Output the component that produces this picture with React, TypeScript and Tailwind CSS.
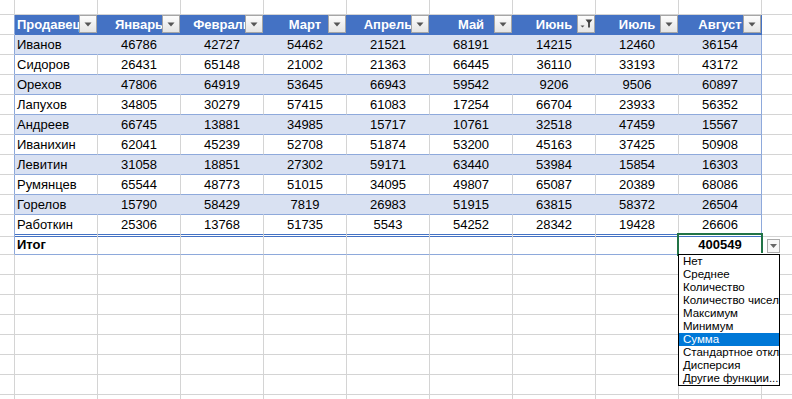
import React from 'react'

const months = ['Январь', 'Февраль', 'Март', 'Апрель', 'Май', 'Июнь', 'Июль', 'Август']

const sales: [string, number[]][] = [
  ['Иванов', [46786, 42727, 54462, 21521, 68191, 14215, 12460, 36154]],
  ['Сидоров', [26431, 65148, 21002, 21363, 66445, 36110, 33193, 43172]],
  ['Орехов', [47806, 64919, 53645, 66943, 59542, 9206, 9506, 60897]],
  ['Лапухов', [34805, 30279, 57415, 61083, 17254, 66704, 23933, 56352]],
  ['Андреев', [66745, 13881, 34985, 15717, 10761, 32518, 47459, 15567]],
  ['Иванихин', [62041, 45239, 52708, 51874, 53200, 45163, 37425, 50908]],
  ['Левитин', [31058, 18851, 27302, 59171, 63440, 53984, 15854, 16303]],
  ['Румянцев', [65544, 48773, 51015, 34095, 49807, 65087, 20389, 68086]],
  ['Горелов', [15790, 58429, 7819, 26983, 51915, 63815, 58372, 26504]],
  ['Работкин', [25306, 13768, 51735, 5543, 54252, 28342, 19428, 26606]],
]

const totals = ['Нет', 'Среднее', 'Количество', 'Количество чисел', 'Максимум', 'Минимум', 'Сумма', 'Стандартное отклонение', 'Дисперсия', 'Другие функции...']

const rowCls = 'grid grid-cols-[15px_repeat(9,83px)_30px] h-[20px]'

// пустая ячейка листа
const Blank = ({ last }: { last?: boolean }) => (
  <div className={last ? 'border-b border-b-[#d4d4d4]' : 'border-r border-b border-r-[#d4d4d4] border-b-[#d4d4d4]'} />
)

// столбец слева от таблицы: правая граница — граница таблицы
const Edge = () => <div className="border-r border-b border-r-[#8ea9db] border-b-[#d4d4d4]" />

function FilterButton({ active }: { active?: boolean }) {
  return (
    <div className="absolute right-0 top-0 w-[18px] h-[18px] border border-[#a6a6a6] bg-linear-to-b from-[#fdfdfd] to-[#e4e4e4] flex items-center justify-center">
      {active ? (
        <svg width="16" height="16" viewBox="0 0 16 16">
          <path d="M2.5 9.5h4L4.5 11.5z" fill="#505050" />
          <path d="M7.5 3.5h7l-2.6 3.2v4.8h-1.8V6.7z" fill="#404040" />
        </svg>
      ) : (
        <svg width="8" height="5" viewBox="0 0 8 5">
          <path d="M0.5 0.5h7L4 4.5z" fill="#555" />
        </svg>
      )}
    </div>
  )
}

function HeaderRow() {
  return (
    <div className={rowCls}>
      <Edge />
      <div className="relative bg-[#4472c4] border-r border-b border-r-[#4472c4] border-b-[#4472c4] text-white font-bold leading-[19px] whitespace-nowrap overflow-hidden pl-[2px]">
        Продавец
        <FilterButton />
      </div>
      {months.map((m, i) => (
        <div
          key={m}
          className="relative bg-[#4472c4] border-r border-b border-r-[#4472c4] border-b-[#4472c4] text-white font-bold leading-[19px] whitespace-nowrap overflow-hidden flex justify-center"
        >
          <span>{m}</span>
          <FilterButton active={i === 5} />
        </div>
      ))}
      <Blank last />
    </div>
  )
}

function DataRow({ name, values, band, last }: { name: string; values: number[]; band: boolean; last: boolean }) {
  const bottom = last ? 'border-b-[3px] border-double border-b-[#4472c4]' : 'border-b border-b-[#8ea9db]'
  const fill = band ? 'bg-[#d9e1f2] border-r border-r-[#d9e1f2]' : 'border-r border-r-[#d4d4d4]'
  const fillEnd = band ? 'bg-[#d9e1f2] border-r border-r-[#8ea9db]' : 'border-r border-r-[#8ea9db]'
  return (
    <div className={rowCls}>
      <Edge />
      <div className={`${fill} ${bottom} leading-[19px] pl-[2px] whitespace-nowrap`}>{name}</div>
      {values.map((v, i) => (
        <div key={i} className={`${i === 7 ? fillEnd : fill} ${bottom} leading-[19px] text-center`}>
          {v}
        </div>
      ))}
      <Blank last />
    </div>
  )
}

function TotalRow() {
  return (
    <div className={rowCls}>
      <Edge />
      <div className="border-r border-b border-r-[#d4d4d4] border-b-[#8ea9db] leading-[19px] pl-[2px] font-bold">Итог</div>
      {months.slice(1).map((m) => (
        <div key={m} className="border-r border-b border-r-[#d4d4d4] border-b-[#8ea9db]" />
      ))}
      <div className="relative border-r border-b border-r-[#8ea9db] border-b-[#8ea9db] leading-[19px] text-center font-bold">
        400549
        <div className="absolute -left-[2px] -top-[2px] -right-[2px] -bottom-[2px] border-2 border-[#217346] pointer-events-none" />
        <div className="absolute -right-[4px] -bottom-[4px] w-[5px] h-[5px] bg-[#217346] border border-white" />
        <div className="absolute left-[88px] top-[4px] w-[13px] h-[14px] border border-[#ababab] bg-[#f7f7f7] flex items-center justify-center">
          <svg width="7" height="4" viewBox="0 0 7 4">
            <path d="M0 0h7L3.5 4z" fill="#666" />
          </svg>
        </div>
        <div className="absolute -left-[1px] top-[19px] w-[102px] border border-black bg-white z-10 text-left font-normal text-[11.5px] leading-[13px]">
          {totals.map((t) => (
            <div
              key={t}
              className={
                t === 'Сумма'
                  ? 'h-[13px] pl-[4px] whitespace-nowrap overflow-hidden bg-[#0078d7] text-white'
                  : 'h-[13px] pl-[4px] whitespace-nowrap overflow-hidden'
              }
            >
              {t}
            </div>
          ))}
        </div>
      </div>
      <Blank last />
    </div>
  )
}

function EmptyRow({ h }: { h?: string }) {
  return (
    <div className={h === 'top' ? 'grid grid-cols-[15px_repeat(9,83px)_30px] h-[15px]' : rowCls}>
      {Array.from({ length: 10 }).map((_, i) => (
        <Blank key={i} />
      ))}
      <Blank last />
    </div>
  )
}

export default function App() {
  return (
    <div className="w-[792px] h-[399px] overflow-hidden bg-white text-black text-[13px] font-['Liberation_Sans',Arial,sans-serif]">
      <EmptyRow h="top" />
      <HeaderRow />
      {sales.map(([name, values], i) => (
        <DataRow key={name} name={name} values={values} band={i % 2 === 0} last={i === sales.length - 1} />
      ))}
      <TotalRow />
      {Array.from({ length: 8 }).map((_, i) => (
        <EmptyRow key={i} />
      ))}
    </div>
  )
}
